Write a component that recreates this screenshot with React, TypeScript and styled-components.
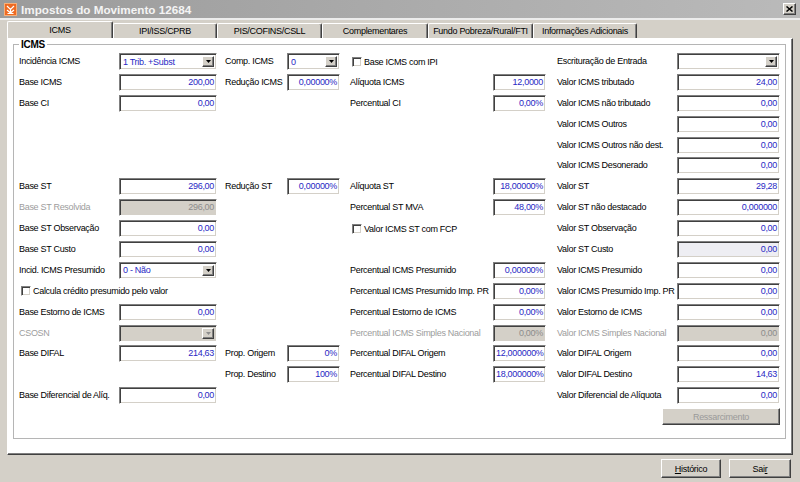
import React from "react";
import styled, { createGlobalStyle } from "styled-components";

const GlobalStyle = createGlobalStyle`
  html, body { margin: 0; padding: 0; background: #d4d0c8; }
  #root { width: 800px; height: 482px; }
`;

const FONT = `"Liberation Sans", Arial, sans-serif`;

const Window = styled.div`
  width: 800px;
  height: 482px;
  box-sizing: border-box;
  display: flex;
  flex-direction: column;
  overflow: hidden;
  background: #d4d0c8;
  font-family: ${FONT};
  font-size: 9px;
  letter-spacing: -0.3px;
  color: #000;
`;

const TitleBar = styled.div`
  height: 18px;
  flex: none;
  display: flex;
  align-items: center;
  gap: 4px;
  padding: 0 3px 0 4px;
  box-sizing: border-box;
  background: linear-gradient(to right, #9b9b9b, #bababa);
`;

const TitleText = styled.span`
  flex: 1;
  font-size: 11.7px;
  font-weight: bold;
  color: #f4f4f4;
  letter-spacing: 0;
`;

const CloseButton = styled.div`
  width: 13px;
  height: 12px;
  box-sizing: border-box;
  background: #d4d0c8;
  border: 1px solid;
  border-color: #fff #404040 #404040 #fff;
  box-shadow: inset -1px -1px 0 #808080;
  display: flex;
  align-items: center;
  justify-content: center;
  margin-right: 1px;
`;

const Body = styled.div`
  flex: 1;
  min-height: 0;
  display: flex;
  flex-direction: column;
  border-top: 2px solid #ececec;
  padding: 1px 7px 0 7px;
`;

const TabStrip = styled.div`
  height: 17px;
  flex: none;
  display: flex;
  align-items: flex-end;
`;

const Tab = styled.div<{ $w: number; $active?: boolean }>`
  width: ${(p) => p.$w}px;
  height: ${(p) => (p.$active ? 17 : 15)}px;
  box-sizing: border-box;
  flex: none;
  display: flex;
  align-items: center;
  justify-content: center;
  background: #d4d0c8;
  border-top: 1px solid #fff;
  border-left: 1px solid #fff;
  border-right: 1px solid #404040;
  box-shadow: inset -1px 0 0 #808080;
  border-radius: 2px 2px 0 0;
  padding-bottom: ${(p) => (p.$active ? 1 : 0)}px;
`;

const TabPanel = styled.div`
  flex: 1;
  min-height: 0;
  display: flex;
  flex-direction: column;
  background: #fff;
  border: 1px solid;
  border-color: #fff #404040 #404040 #fff;
  box-shadow: inset -1px -1px 0 #808080;
`;

const GroupBox = styled.div`
  flex: 1;
  margin: 5px 6px 15px 5px;
  border: 1px solid #b5b5b5;
  display: flex;
  flex-direction: column;
`;

const Legend = styled.div`
  align-self: flex-start;
  margin: -6px 0 0 5px;
  padding: 0 2px;
  height: 11px;
  line-height: 11px;
  background: #fff;
  font-weight: bold;
  font-size: 10px;
`;

const FieldGrid = styled.div`
  display: grid;
  grid-template-columns: 100px 98px 70px 53px 153px 53px 131px 103px;
  grid-template-rows: repeat(18, 17px);
  row-gap: 3.9px;
  padding: 3px 0 0 5px;
`;

const Label = styled.div<{ $row: number; $col: number; $pad: number; $disabled?: boolean }>`
  grid-row: ${(p) => p.$row};
  grid-column: ${(p) => p.$col};
  padding-left: ${(p) => p.$pad}px;
  line-height: 17px;
  white-space: nowrap;
  color: ${(p) => (p.$disabled ? "#9d9d9d" : "#000")};
`;

type Variant = "normal" | "disabled" | "tinted";

const bgFor = (v: Variant) => (v === "disabled" ? "#d4d0c8" : v === "tinted" ? "#eeeef3" : "#fff");

const TextBox = styled.div<{ $row: number; $col: number; $variant: Variant }>`
  grid-row: ${(p) => p.$row};
  grid-column: ${(p) => p.$col};
  height: 17px;
  box-sizing: border-box;
  border: 1px solid;
  border-color: #808080 #fff #fff #808080;
  box-shadow: inset 1px 1px 0 #404040, inset -1px -1px 0 #d4d0c8;
  background: ${(p) => bgFor(p.$variant)};
  color: ${(p) => (p.$variant === "disabled" ? "#8c8c8c" : "#2828c4")};
  text-align: right;
  padding: 0 2px;
  line-height: 15px;
  white-space: nowrap;
  overflow: hidden;
`;

const ComboBox = styled.div<{ $row: number; $col: number; $disabled?: boolean }>`
  grid-row: ${(p) => p.$row};
  grid-column: ${(p) => p.$col};
  height: 17px;
  box-sizing: border-box;
  border: 1px solid;
  border-color: #808080 #fff #fff #808080;
  box-shadow: inset 1px 1px 0 #404040, inset -1px -1px 0 #d4d0c8;
  background: ${(p) => (p.$disabled ? "#d4d0c8" : "#fff")};
  display: flex;
  align-items: center;
  padding: 2px 2px 2px 3px;
`;

const ComboText = styled.span`
  flex: 1;
  color: #2828c4;
  white-space: nowrap;
`;

const ComboArrow = styled.span<{ $disabled?: boolean }>`
  width: 12px;
  height: 11px;
  box-sizing: border-box;
  background: #d4d0c8;
  border: 1px solid;
  border-color: #fff #404040 #404040 #fff;
  box-shadow: inset -1px -1px 0 #808080;
  display: flex;
  align-items: center;
  justify-content: center;
  color: ${(p) => (p.$disabled ? "#8c8c8c" : "#000")};
`;

const CheckRow = styled.div<{ $row: number; $col: number; $span: number; $pad: number }>`
  grid-row: ${(p) => p.$row};
  grid-column: ${(p) => p.$col} / span ${(p) => p.$span};
  padding-left: ${(p) => p.$pad}px;
  display: flex;
  align-items: center;
  gap: 2px;
  white-space: nowrap;
`;

const CheckBox = styled.span`
  width: 10px;
  height: 10px;
  box-sizing: border-box;
  background: #fff;
  border: 1px solid;
  border-color: #808080 #fff #fff #808080;
  box-shadow: inset 1px 1px 0 #404040, inset -1px -1px 0 #d4d0c8;
`;

const PanelButton = styled.div<{ $row: number; $col: number }>`
  grid-row: ${(p) => p.$row};
  grid-column: ${(p) => p.$col} / span 2;
  justify-self: end;
  width: 118px;
  height: 17px;
  box-sizing: border-box;
  background: #d4d0c8;
  border: 1px solid;
  border-color: #fff #404040 #404040 #fff;
  box-shadow: inset -1px -1px 0 #808080;
  color: #9a9a9a;
  display: flex;
  align-items: center;
  justify-content: center;
`;

const ButtonBar = styled.div`
  height: 27px;
  flex: none;
  display: flex;
  justify-content: flex-end;
  align-items: center;
  gap: 8px;
  padding-right: 2px;
`;

const DialogButton = styled.div<{ $w: number }>`
  width: ${(p) => p.$w}px;
  height: 19px;
  box-sizing: border-box;
  background: #d4d0c8;
  border: 1px solid;
  border-color: #fff #404040 #404040 #fff;
  box-shadow: inset -1px -1px 0 #808080;
  display: flex;
  align-items: center;
  justify-content: center;
  u { text-decoration: underline; }
`;

type Slot = "A" | "B" | "C" | "D";
const SLOT: Record<Slot, { label: number; input: number; pad: number; check: number }> = {
  A: { label: 1, input: 2, pad: 0, check: 2 },
  B: { label: 3, input: 4, pad: 8, check: 8 },
  C: { label: 5, input: 6, pad: 10, check: 12 },
  D: { label: 7, input: 8, pad: 11, check: 11 },
};

type Item = {
  r: number;
  s: Slot;
  kind: "input" | "combo" | "check";
  label: string;
  value?: string;
  disabled?: boolean;
  tinted?: boolean;
  span?: number;
};

const items: Item[] = [
  { r: 1, s: "A", kind: "combo", label: "Incidência ICMS", value: "1 Trib. +Subst" },
  { r: 1, s: "B", kind: "combo", label: "Comp. ICMS", value: "0" },
  { r: 1, s: "C", kind: "check", label: "Base ICMS com IPI" },
  { r: 1, s: "D", kind: "combo", label: "Escrituração de Entrada", value: "" },
  { r: 2, s: "A", kind: "input", label: "Base ICMS", value: "200,00" },
  { r: 2, s: "B", kind: "input", label: "Redução ICMS", value: "0,00000%" },
  { r: 2, s: "C", kind: "input", label: "Alíquota ICMS", value: "12,0000" },
  { r: 2, s: "D", kind: "input", label: "Valor ICMS tributado", value: "24,00" },
  { r: 3, s: "A", kind: "input", label: "Base CI", value: "0,00" },
  { r: 3, s: "C", kind: "input", label: "Percentual CI", value: "0,00%" },
  { r: 3, s: "D", kind: "input", label: "Valor ICMS não tributado", value: "0,00" },
  { r: 4, s: "D", kind: "input", label: "Valor ICMS Outros", value: "0,00" },
  { r: 5, s: "D", kind: "input", label: "Valor ICMS Outros não dest.", value: "0,00" },
  { r: 6, s: "D", kind: "input", label: "Valor ICMS Desonerado", value: "0,00" },
  { r: 7, s: "A", kind: "input", label: "Base ST", value: "296,00" },
  { r: 7, s: "B", kind: "input", label: "Redução ST", value: "0,00000%" },
  { r: 7, s: "C", kind: "input", label: "Alíquota ST", value: "18,00000%" },
  { r: 7, s: "D", kind: "input", label: "Valor ST", value: "29,28" },
  { r: 8, s: "A", kind: "input", label: "Base ST Resolvida", value: "296,00", disabled: true },
  { r: 8, s: "C", kind: "input", label: "Percentual ST MVA", value: "48,00%" },
  { r: 8, s: "D", kind: "input", label: "Valor ST não destacado", value: "0,000000" },
  { r: 9, s: "A", kind: "input", label: "Base ST Observação", value: "0,00" },
  { r: 9, s: "C", kind: "check", label: "Valor ICMS ST com FCP" },
  { r: 9, s: "D", kind: "input", label: "Valor ST Observação", value: "0,00" },
  { r: 10, s: "A", kind: "input", label: "Base ST Custo", value: "0,00" },
  { r: 10, s: "D", kind: "input", label: "Valor ST Custo", value: "0,00", tinted: true },
  { r: 11, s: "A", kind: "combo", label: "Incid. ICMS Presumido", value: "0 - Não" },
  { r: 11, s: "C", kind: "input", label: "Percentual ICMS Presumido", value: "0,00000%" },
  { r: 11, s: "D", kind: "input", label: "Valor ICMS Presumido", value: "0,00" },
  { r: 12, s: "A", kind: "check", label: "Calcula crédito presumido pelo valor", span: 3 },
  { r: 12, s: "C", kind: "input", label: "Percentual ICMS Presumido Imp. PR", value: "0,00%" },
  { r: 12, s: "D", kind: "input", label: "Valor ICMS Presumido Imp. PR", value: "0,00" },
  { r: 13, s: "A", kind: "input", label: "Base Estorno de ICMS", value: "0,00" },
  { r: 13, s: "C", kind: "input", label: "Percentual Estorno de ICMS", value: "0,00%" },
  { r: 13, s: "D", kind: "input", label: "Valor Estorno de ICMS", value: "0,00" },
  { r: 14, s: "A", kind: "combo", label: "CSOSN", value: "", disabled: true },
  { r: 14, s: "C", kind: "input", label: "Percentual ICMS Simples Nacional", value: "0,00%", disabled: true },
  { r: 14, s: "D", kind: "input", label: "Valor ICMS Simples Nacional", value: "0,00", disabled: true },
  { r: 15, s: "A", kind: "input", label: "Base DIFAL", value: "214,63" },
  { r: 15, s: "B", kind: "input", label: "Prop. Origem", value: "0%" },
  { r: 15, s: "C", kind: "input", label: "Percentual DIFAL Origem", value: "12,000000%" },
  { r: 15, s: "D", kind: "input", label: "Valor DIFAL Origem", value: "0,00" },
  { r: 16, s: "B", kind: "input", label: "Prop. Destino", value: "100%" },
  { r: 16, s: "C", kind: "input", label: "Percentual DIFAL Destino", value: "18,000000%" },
  { r: 16, s: "D", kind: "input", label: "Valor DIFAL Destino", value: "14,63" },
  { r: 17, s: "A", kind: "input", label: "Base Diferencial de Alíq.", value: "0,00" },
  { r: 17, s: "D", kind: "input", label: "Valor Diferencial de Alíquota", value: "0,00" },
];

const tabs = [
  { label: "ICMS", w: 106, active: true },
  { label: "IPI/ISS/CPRB", w: 104 },
  { label: "PIS/COFINS/CSLL", w: 105 },
  { label: "Complementares", w: 106 },
  { label: "Fundo Pobreza/Rural/FTI", w: 105 },
  { label: "Informações Adicionais", w: 104 },
];

const AppIcon = () => (
  <svg width="13" height="13" viewBox="0 0 13 13">
    <rect x="0" y="0" width="13" height="13" fill="#ee6a22" />
    <rect x="0.5" y="0.5" width="12" height="12" fill="none" stroke="#f7b07a" />
    <path d="M3 3 L6.5 6.5 L10 3 M6.5 6.5 L6.5 10.5 M3 7 L6.5 10 L10 7 M3.5 10.5 L9.5 10.5" stroke="#fff" strokeWidth="1.2" fill="none" />
  </svg>
);

const CloseGlyph = () => (
  <svg width="7" height="6" viewBox="0 0 7 6">
    <path d="M0.5 0.5 L6.5 5.5 M6.5 0.5 L0.5 5.5" stroke="#000" strokeWidth="1.5" />
  </svg>
);

const ArrowGlyph = () => (
  <svg width="5" height="3" viewBox="0 0 5 3">
    <path d="M0 0 H5 L2.5 3 Z" fill="currentColor" />
  </svg>
);

const renderItem = (it: Item, i: number) => {
  const slot = SLOT[it.s];
  if (it.kind === "check") {
    return (
      <CheckRow key={i} $row={it.r} $col={slot.label} $span={it.span ?? 2} $pad={it.s === "A" ? 2 : slot.check}>
        <CheckBox />
        <span>{it.label}</span>
      </CheckRow>
    );
  }
  const label = (
    <Label key={`l${i}`} $row={it.r} $col={slot.label} $pad={slot.pad} $disabled={it.disabled}>
      {it.label}
    </Label>
  );
  if (it.kind === "combo") {
    return [
      label,
      <ComboBox key={`c${i}`} $row={it.r} $col={slot.input} $disabled={it.disabled}>
        <ComboText>{it.value}</ComboText>
        <ComboArrow $disabled={it.disabled}>
          <ArrowGlyph />
        </ComboArrow>
      </ComboBox>,
    ];
  }
  const variant: Variant = it.disabled ? "disabled" : it.tinted ? "tinted" : "normal";
  return [
    label,
    <TextBox key={`t${i}`} $row={it.r} $col={slot.input} $variant={variant}>
      {it.value}
    </TextBox>,
  ];
};

export default function App() {
  return (
    <>
      <GlobalStyle />
      <Window>
        <TitleBar>
          <AppIcon />
          <TitleText>Impostos do Movimento 12684</TitleText>
          <CloseButton>
            <CloseGlyph />
          </CloseButton>
        </TitleBar>
        <Body>
          <TabStrip>
            {tabs.map((t) => (
              <Tab key={t.label} $w={t.w} $active={t.active}>
                {t.label}
              </Tab>
            ))}
          </TabStrip>
          <TabPanel>
            <GroupBox>
              <Legend>ICMS</Legend>
              <FieldGrid>
                {items.map(renderItem)}
                <PanelButton $row={18} $col={7}>Ressarcimento</PanelButton>
              </FieldGrid>
            </GroupBox>
          </TabPanel>
          <ButtonBar>
            <DialogButton $w={60}>
              <span>
                <u>H</u>istórico
              </span>
            </DialogButton>
            <DialogButton $w={62}>
              <span>
                Sai<u>r</u>
              </span>
            </DialogButton>
          </ButtonBar>
        </Body>
      </Window>
    </>
  );
}
